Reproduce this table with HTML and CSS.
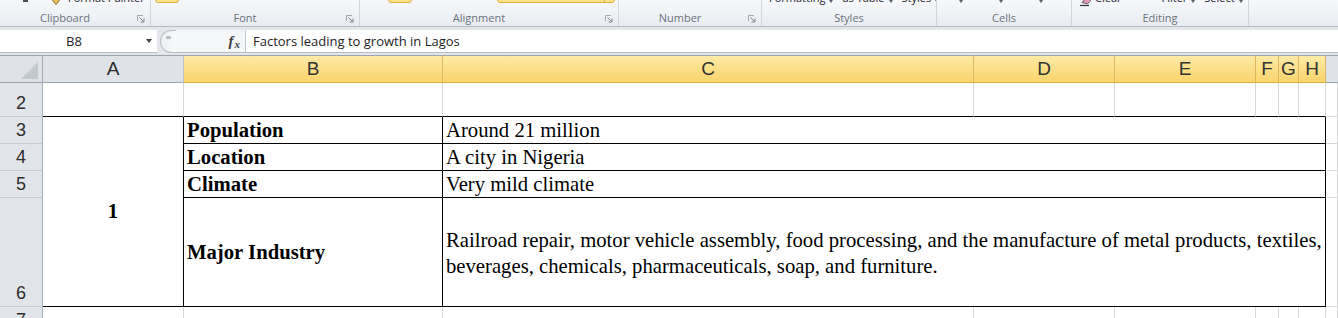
FILE: index.html
```html
<!DOCTYPE html>
<html>
<head>
<meta charset="utf-8">
<title>Factors leading to growth in Lagos</title>
<link rel="stylesheet" href="styles.css">
</head>
<body>
<div class="ribbon">
  <div class="group g-clip">
    <div class="g-top">
      <span class="dd-mark"></span>
      <svg class="brush" width="10" height="14" viewBox="0 0 10 14"><path d="M1 0.5h8v7l-4 5l-4-5z" fill="#ecc55a" stroke="#8a6a1f"/></svg>
      <span class="btn-text">Format Painter</span>
    </div>
    <div class="g-label"><span class="lbl">Clipboard</span><span class="launcher"><svg width="8" height="8" viewBox="0 0 8 8"><path d="M0.5 6V0.5H6" stroke="#a3a9b1" fill="none"/><path d="M2.5 2.5l4 4M7 3.5v3.5H3.5" stroke="#7d848d" fill="none"/></svg></span></div>
  </div>
  <div class="group g-font">
    <div class="g-top">
      <span class="ybox yb-font"></span>
    </div>
    <div class="g-label"><span class="lbl">Font</span><span class="launcher"><svg width="8" height="8" viewBox="0 0 8 8"><path d="M0.5 6V0.5H6" stroke="#a3a9b1" fill="none"/><path d="M2.5 2.5l4 4M7 3.5v3.5H3.5" stroke="#7d848d" fill="none"/></svg></span></div>
  </div>
  <div class="group g-align">
    <div class="g-top">
      <span class="ybox yb-al1"></span>
      <span class="ybox yb-al2"><span class="yb-split"></span></span>
    </div>
    <div class="g-label"><span class="lbl">Alignment</span><span class="launcher"><svg width="8" height="8" viewBox="0 0 8 8"><path d="M0.5 6V0.5H6" stroke="#a3a9b1" fill="none"/><path d="M2.5 2.5l4 4M7 3.5v3.5H3.5" stroke="#7d848d" fill="none"/></svg></span></div>
  </div>
  <div class="group g-num">
    <div class="g-top"></div>
    <div class="g-label"><span class="lbl">Number</span><span class="launcher"><svg width="8" height="8" viewBox="0 0 8 8"><path d="M0.5 6V0.5H6" stroke="#a3a9b1" fill="none"/><path d="M2.5 2.5l4 4M7 3.5v3.5H3.5" stroke="#7d848d" fill="none"/></svg></span></div>
  </div>
  <div class="group g-styles">
    <div class="g-top">
      <span class="btn-text">Formatting</span><span class="arr"></span>
      <span class="btn-text sp">as Table</span><span class="arr"></span>
      <span class="btn-text sp">Styles</span><span class="arr"></span>
    </div>
    <div class="g-label"><span class="lbl">Styles</span></div>
  </div>
  <div class="group g-cells">
    <div class="g-top">
      <span class="arr a1"></span><span class="arr a2"></span><span class="arr a2"></span>
    </div>
    <div class="g-label"><span class="lbl">Cells</span></div>
  </div>
  <div class="group g-edit">
    <div class="g-top">
      <svg class="eraser" width="14" height="14" viewBox="0 0 14 14"><path d="M3 9.5l5-6l4 3.5l-3.5 4z" fill="#e995b4" stroke="#5d6470"/><path d="M1 12.5h9" stroke="#2f3540" stroke-width="1.2"/></svg>
      <span class="btn-text">Clear</span>
      <span class="btn-text f1">Filter</span><span class="arr"></span>
      <span class="btn-text sp">Select</span><span class="arr"></span>
    </div>
    <div class="g-label"><span class="lbl">Editing</span></div>
  </div>
  <div class="group g-rest"></div>
</div>

<div class="fbar">
  <div class="namebox"><span class="name">B8</span><span class="nb-arrow"></span></div>
  <div class="splitter"><span class="knob"></span></div>
  <div class="fx"><i>f</i><i class="fxx">x</i></div>
  <div class="finput">Factors leading to growth in Lagos</div>
</div>

<div class="sheet">
  <div class="corner"><span class="tri"></span></div>
  <div class="ch">A</div>
  <div class="ch sel">B</div>
  <div class="ch sel">C</div>
  <div class="ch sel">D</div>
  <div class="ch sel">E</div>
  <div class="ch sel">F</div>
  <div class="ch sel">G</div>
  <div class="ch sel">H</div>
  <div class="ch last"></div>

  <div class="rh">2</div>
  <div class="c bb"></div>
  <div class="c bb"></div>
  <div class="c bb"></div>
  <div class="c bb"></div>
  <div class="c bb"></div>
  <div class="c bb"></div>
  <div class="c bb"></div>
  <div class="c bb"></div>
  <div class="c"></div>

  <div class="rh">3</div>
  <div class="c bb br num">1</div>
  <div class="c bb br kcell">Population</div>
  <div class="c bb br val">Around 21 million</div>
  <div class="c"></div>

  <div class="rh">4</div>
  <div class="c bb br kcell">Location</div>
  <div class="c bb br val">A city in Nigeria</div>
  <div class="c"></div>

  <div class="rh">5</div>
  <div class="c bb br kcell">Climate</div>
  <div class="c bb br val">Very mild climate</div>
  <div class="c"></div>

  <div class="rh">6</div>
  <div class="c bb br kcell">Major Industry</div>
  <div class="c bb br val multi">Railroad repair, motor vehicle assembly, food processing, and the manufacture of metal products, textiles,<br>beverages, chemicals, pharmaceuticals, soap, and furniture.</div>
  <div class="c"></div>

  <div class="rh">7</div>
  <div class="c"></div>
  <div class="c"></div>
  <div class="c"></div>
  <div class="c"></div>
  <div class="c"></div>
  <div class="c"></div>
  <div class="c"></div>
  <div class="c"></div>
  <div class="c"></div>
</div>
</body>
</html>
```

FILE: styles.css
```css
* { box-sizing: border-box; }
html, body { margin: 0; padding: 0; }
body {
  width: 1338px;
  height: 318px;
  overflow: hidden;
  background: #ffffff;
  font-family: "Open Sans", "Noto Sans", sans-serif;
}

/* ---------- Ribbon ---------- */
.ribbon {
  display: flex;
  height: 27px;
  background: linear-gradient(#f6f8fa, #e8ecf1);
  border-bottom: 1px solid #b6bbc2;
}
.group {
  flex: none;
  display: flex;
  flex-direction: column;
  border-right: 1px solid #d2d7dd;
}
.g-clip { width: 151px; }
.g-font { width: 209px; }
.g-align { width: 259px; }
.g-num { width: 143px; }
.g-styles { width: 175px; }
.g-cells { width: 135px; }
.g-edit { width: 177px; }
.g-rest { flex: 1; border-right: none; }

.g-top {
  height: 10px;
  overflow: hidden;
  display: flex;
  align-items: flex-start;
}
.g-label {
  height: 16px;
  display: flex;
  align-items: center;
}
.lbl {
  flex: 1;
  text-align: center;
  font-size: 11px;
  line-height: 16px;
  color: #6a717b;
}
.launcher {
  width: 20px;
  display: flex;
  justify-content: flex-end;
  padding-right: 5px;
  padding-top: 1px;
}
.launcher svg { display: block; }

.btn-text {
  font-size: 11px;
  line-height: 14px;
  margin-top: -9px;
  color: #1f242b;
  white-space: nowrap;
}
.btn-text.sp { margin-left: 9px; }
.arr {
  width: 0;
  height: 0;
  margin-top: 0;
  margin-left: 4px;
  border-left: 2.5px solid transparent;
  border-right: 2.5px solid transparent;
  border-top: 3px solid #5a6068;
}

.g-clip .g-top { padding-left: 23px; }
.dd-mark { width: 5px; height: 2px; background: #4a4f57; }
.brush { margin-left: 23px; margin-top: -8px; }
.g-clip .btn-text { margin-left: 7px; }

.ybox {
  height: 20px;
  margin-top: -17px;
  border: 1px solid #e0b244;
  border-radius: 3px;
  background: linear-gradient(#fff4c8, #fde083);
}
.yb-font { width: 24px; margin-left: 4px; }
.yb-al1 { width: 24px; margin-left: 28px; }
.yb-al2 { width: 118px; margin-left: 85px; display: flex; justify-content: flex-end; }
.yb-split { width: 10px; border-left: 1px solid #e0b244; }

.g-styles .g-top { padding-left: 7px; }
.g-cells .g-top { padding-left: 22px; }
.g-cells .a1 { margin-left: 0; }
.g-cells .a2 { margin-left: 36px; }
.g-edit .g-top { padding-left: 7px; }
.eraser { margin-top: -7px; }
.g-edit .btn-text { margin-left: 2px; }
.g-edit .btn-text.f1 { margin-left: 40px; }
.g-edit .btn-text.sp { margin-left: 9px; }

/* ---------- Formula bar ---------- */
.fbar {
  display: flex;
  height: 28px;
  padding-top: 3px;
  padding-bottom: 2px;
  background: #e3e7ec;
}
.namebox {
  width: 157px;
  background: #ffffff;
  border-bottom: 1px solid #b7bcc3;
  display: flex;
  align-items: center;
}
.name {
  flex: 1;
  text-align: center;
  font-size: 13px;
  color: #1e1e1e;
  padding-left: 2px;
}
.nb-arrow {
  width: 0;
  height: 0;
  margin-right: 5px;
  border-left: 3.5px solid transparent;
  border-right: 3.5px solid transparent;
  border-top: 4px solid #3c4148;
}
.splitter {
  width: 16px;
  margin-left: 3px;
  border: 1px solid #bcc1c7;
  border-right: none;
  border-radius: 12px 0 0 12px;
  background: linear-gradient(90deg, #eceef1, #f8f9fa);
  display: flex;
  justify-content: center;
  padding-top: 5px;
}
.knob {
  width: 5px;
  height: 3px;
  border-radius: 2px;
  background: #b5bac1;
}
.fx {
  width: 69px;
  background: #f5f6f8;
  border-bottom: 1px solid #b7bcc3;
  display: flex;
  align-items: center;
  justify-content: flex-end;
  padding-right: 5px;
  font-family: "Liberation Serif", serif;
  font-weight: bold;
  color: #3a3f46;
}
.fx i { font-size: 15px; }
.fx .fxx { font-size: 11px; margin-top: 5px; margin-left: 1px; }
.finput {
  flex: 1;
  background: #ffffff;
  border-left: 1px solid #c5cad0;
  border-bottom: 1px solid #b7bcc3;
  padding-left: 7px;
  display: flex;
  align-items: center;
  font-size: 13px;
  color: #1e1e1e;
  white-space: nowrap;
}

/* ---------- Sheet grid ---------- */
.sheet {
  display: grid;
  grid-template-columns: 43px 141px 259px 531px 141px 141px 23px 20px 27px 12px;
  grid-template-rows: 28px 34px 27px 27px 27px 109px 27px;
}
.corner {
  background: #dfe3e8;
  border-top: 1px solid #9ea4ac;
  border-bottom: 1px solid #9ea4ac;
  border-right: 1px solid #a9afb7;
  display: flex;
  justify-content: flex-end;
  align-items: flex-end;
  padding: 0 4px 3px 0;
}
.tri {
  width: 0;
  height: 0;
  border-left: 17px solid transparent;
  border-bottom: 17px solid #c3c8cf;
}
.ch {
  background: #dfe3e8;
  border-top: 1px solid #9ea4ac;
  border-bottom: 1px solid #9ea4ac;
  border-right: 1px solid #bfc4cb;
  display: flex;
  align-items: center;
  justify-content: center;
  font-family: "Liberation Sans", Arial, sans-serif;
  font-size: 19px;
  color: #2a2a2a;
}
.ch.sel {
  background: linear-gradient(#fdeaa6, #f9d46b);
  border-right-color: #dcb660;
  border-bottom-color: #dfae4a;
  color: #333333;
}
.ch.last { border-right: none; }
.rh {
  background: #e1e5ea;
  border-right: 1px solid #a9afb7;
  border-bottom: 1px solid #c6cbd1;
  display: flex;
  align-items: flex-end;
  justify-content: center;
  padding-bottom: 4px;
  font-family: "Liberation Sans", Arial, sans-serif;
  font-size: 18px;
  line-height: 1;
  color: #2d2d2d;
}
.c {
  border-right: 1px solid #d9d9d9;
  border-bottom: 1px solid #d9d9d9;
  font-family: "Liberation Serif", "Times New Roman", serif;
  font-size: 20.7px;
  color: #000000;
}
.bb { border-bottom-color: #000000; }
.br { border-right-color: #000000; }
.num {
  grid-row: span 4;
  display: flex;
  align-items: center;
  justify-content: center;
  font-weight: bold;
}
.kcell {
  display: flex;
  align-items: center;
  padding-left: 3px;
  padding-top: 1px;
  font-weight: bold;
  white-space: nowrap;
}
.val {
  grid-column: span 6;
  display: flex;
  align-items: center;
  padding-left: 3px;
  white-space: nowrap;
}
.multi {
  line-height: 26px;
  padding-top: 1px;
}
```
